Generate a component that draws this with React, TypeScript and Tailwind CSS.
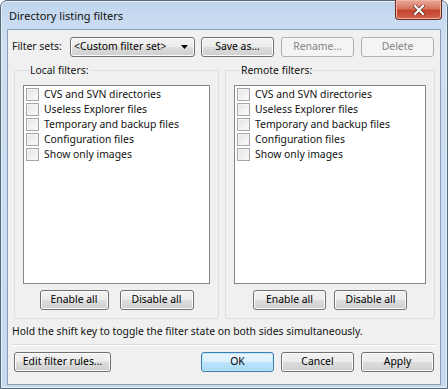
import React from 'react';

const filters = [
  'CVS and SVN directories',
  'Useless Explorer files',
  'Temporary and backup files',
  'Configuration files',
  'Show only images',
];

const btn =
  'h-[20px] rounded-[3px] border border-[#707070] bg-[linear-gradient(#f2f2f2,#ebebeb_50%,#dddddd_50%,#cfcfcf)] shadow-[inset_0_0_0_1px_#fcfcfc] text-black flex items-center justify-center';

function Btn({ w, children, disabled, primary }: { w: string; children: React.ReactNode; disabled?: boolean; primary?: boolean }) {
  if (disabled) {
    return (
      <div className={`${w} h-[20px] rounded-[3px] border border-[#adb2b5] bg-[#f4f4f4] text-[#838383] flex items-center justify-center`}>
        {children}
      </div>
    );
  }
  if (primary) {
    return (
      <div className={`${w} h-[20px] rounded-[3px] border border-[#3c7fb1] bg-[linear-gradient(#eaf6fd,#d9f0fc_50%,#bee6fd_50%,#a7d9f5)] shadow-[inset_0_0_0_1px_#bfe4f8] text-black flex items-center justify-center`}>
        {children}
      </div>
    );
  }
  return <div className={`${w} ${btn}`}>{children}</div>;
}

function Check() {
  return (
    <div className="shrink-0 w-[13px] h-[13px] border border-[#a6a6a6] bg-[linear-gradient(135deg,#e4e4e4,#fbfbfb)] shadow-[inset_0_0_0_1px_#f4f4f4]" />
  );
}

function Group({ title, w, btnW }: { title: string; w: string; btnW: [string, string, string] }) {
  return (
    <fieldset className={`${w} rounded-[3px] border border-[#d5dfe5] px-[8px] pb-[8px] flex flex-col`}>
      <legend className="ml-[6px] px-[1px] leading-[16px]">{title}</legend>
      <div className="mt-[7px] h-[199px] border border-[#828790] bg-white pt-[1px]">
        {filters.map((f) => (
          <div key={f} className="h-[15px] flex items-center pl-[2px] gap-[5px] leading-[15px] whitespace-nowrap">
            <Check />
            <span>{f}</span>
          </div>
        ))}
      </div>
      <div className={`mt-[6px] flex justify-center ${btnW[2]}`}>
        <Btn w={btnW[0]}>Enable all</Btn>
        <Btn w={btnW[1]}>Disable all</Btn>
      </div>
    </fieldset>
  );
}

export default function App() {
  return (
    <div
      className="w-[448px] h-[389px] bg-white text-[10.4px] text-[#111]"
      style={{ fontFamily: '"Noto Sans", "Open Sans", sans-serif' }}
    >
      <div className="h-full rounded-t-[7px] border border-[#58697c] bg-[linear-gradient(#c0d6ee,#cfe0f2_40px,#c6daef)] shadow-[inset_0_0_0_1px_#e4eef9] flex flex-col px-[6px] pb-[3px]">
        {/* title bar */}
        <div className="h-[28px] flex items-start justify-between">
          <div className="pl-[2px] pt-[7px] leading-[16px] text-[11px]">Directory listing filters</div>
          <div className="-mt-[1px] -mr-[1px] w-[47px] h-[20px] rounded-b-[4px] border border-[#6e2a21] border-t-0 bg-[linear-gradient(#e9a99b,#d8745f_45%,#c3432b_55%,#d0654c)] shadow-[inset_0_0_0_1px_#efb6a8] flex items-center justify-center">
            <svg width="12" height="10" viewBox="0 0 12 10">
              <path d="M2 1 L10 9 M10 1 L2 9" stroke="#5a241d" strokeWidth="3.4" strokeLinecap="square" />
              <path d="M2 1 L10 9 M10 1 L2 9" stroke="#ffffff" strokeWidth="2.2" strokeLinecap="square" />
            </svg>
          </div>
        </div>

        {/* client */}
        <div className="flex-1 border border-[#8a9db4] bg-[#f0f0f0] flex flex-col">
          <div className="mt-[7px] pl-[4px] pr-[6px] flex items-center">
            <div className="w-[58px]">Filter sets:</div>
            <div className={`w-[125px] ${btn} !justify-between pl-[3px] pr-[6px]`}>
              <span>&lt;Custom filter set&gt;</span>
              <svg width="7" height="4" viewBox="0 0 7 4">
                <path d="M0 0 H7 L3.5 4 Z" fill="#000" />
              </svg>
            </div>
            <div className="ml-[6px] flex gap-[7px]">
              <Btn w="w-[73px]">Save as...</Btn>
              <Btn w="w-[73px]" disabled>Rename...</Btn>
              <Btn w="w-[73px]" disabled>Delete</Btn>
            </div>
          </div>

          <div className="mt-[5px] pl-[6px] flex gap-[6px]">
            <Group title="Local filters:" w="w-[205px]" btnW={['w-[69px]', 'w-[74px]', 'gap-[11px]']} />
            <Group title="Remote filters:" w="w-[210px]" btnW={['w-[73px]', 'w-[73px]', 'gap-[8px]']} />
          </div>

          <div className="mt-[4px] pl-[4px] leading-[16px]">
            Hold the shift key to toggle the filter state on both sides simultaneously.
          </div>
          <div className="mt-[5px] mx-[4px] h-[2px] border-t border-[#d5dfe5] border-b border-b-white" />
          <div className="mt-[6px] px-[6px] flex">
            <Btn w="w-[97px]">Edit filter rules...</Btn>
            <div className="ml-auto flex gap-[7px]">
              <Btn w="w-[73px]" primary>OK</Btn>
              <Btn w="w-[73px]">Cancel</Btn>
              <Btn w="w-[73px]">Apply</Btn>
            </div>
          </div>
        </div>
      </div>
    </div>
  );
}
